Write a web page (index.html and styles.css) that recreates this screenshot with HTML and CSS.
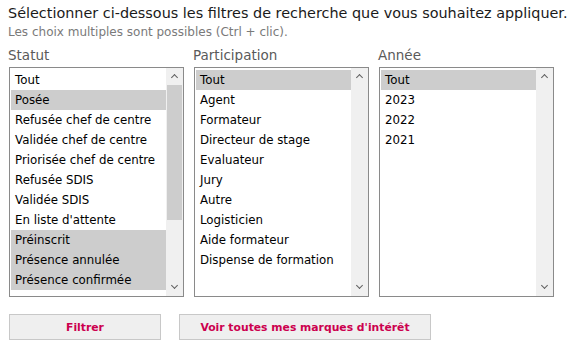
FILE: index.html
```html
<!DOCTYPE html>
<html lang="fr">
    <head>
        <meta charset="UTF-8" />
        <title>Filtres</title>
        <link rel="stylesheet" href="styles.css">
    </head>
    <body>
        <p class="intro">Sélectionner ci-dessous les filtres de recherche que vous souhaitez appliquer.</p>
        <p class="hint">Les choix multiples sont possibles (Ctrl + clic).</p>

        <div class="filters">
            <div class="filter">
                <label>Statut</label>
                <div class="listbox">
                    <ul class="options">
                        <li>Tout</li>
                        <li class="selected">Posée</li>
                        <li>Refusée chef de centre</li>
                        <li>Validée chef de centre</li>
                        <li>Priorisée chef de centre</li>
                        <li>Refusée SDIS</li>
                        <li>Validée SDIS</li>
                        <li>En liste d'attente</li>
                        <li class="selected">Préinscrit</li>
                        <li class="selected">Présence annulée</li>
                        <li class="selected">Présence confirmée</li>
                    </ul>
                    <div class="scrollbar">
                        <span class="arrow up"></span>
                        <div class="track"><div class="thumb"></div></div>
                        <span class="arrow down"></span>
                    </div>
                </div>
            </div>

            <div class="filter">
                <label>Participation</label>
                <div class="listbox">
                    <ul class="options">
                        <li class="selected">Tout</li>
                        <li>Agent</li>
                        <li>Formateur</li>
                        <li>Directeur de stage</li>
                        <li>Evaluateur</li>
                        <li>Jury</li>
                        <li>Autre</li>
                        <li>Logisticien</li>
                        <li>Aide formateur</li>
                        <li>Dispense de formation</li>
                    </ul>
                    <div class="scrollbar">
                        <span class="arrow up"></span>
                        <div class="track"></div>
                        <span class="arrow down"></span>
                    </div>
                </div>
            </div>

            <div class="filter">
                <label>Année</label>
                <div class="listbox">
                    <ul class="options">
                        <li class="selected">Tout</li>
                        <li>2023</li>
                        <li>2022</li>
                        <li>2021</li>
                    </ul>
                    <div class="scrollbar">
                        <span class="arrow up"></span>
                        <div class="track"></div>
                        <span class="arrow down"></span>
                    </div>
                </div>
            </div>
        </div>

        <div class="actions">
            <button class="btn btn-filter">Filtrer</button>
            <button class="btn btn-all">Voir toutes mes marques d'intérêt</button>
        </div>
    </body>
</html>
```

FILE: styles.css
```css
body {
    font-family: "DejaVu Sans", Verdana, sans-serif;
    margin: 0;
    padding: 3px 8px;
    background-color: #ffffff;
    color: #000000;
}
.intro {
    margin: 0;
    font-size: 14.4px;
    line-height: 20px;
    color: #1a1a1a;
}
.hint {
    margin: 0;
    font-size: 12px;
    line-height: 18px;
    color: #7a7a7a;
}
.filters {
    display: flex;
    gap: 10px;
    margin-top: 4px;
    padding-left: 1px;
}
.filter label {
    display: block;
    font-size: 13.5px;
    line-height: 20px;
    color: #5a5a5a;
    margin-bottom: 2px;
    margin-left: -1px;
}
.listbox {
    display: flex;
    width: 173px;
    height: 228px;
    border: 1px solid #8a8a8a;
    background-color: #ffffff;
}
.options {
    flex: 1;
    list-style: none;
    margin: 0;
    padding: 2px 0 0 1px;
}
.options li {
    height: 20px;
    line-height: 20px;
    padding-left: 4px;
    font-size: 11.8px;
    white-space: nowrap;
}
.options li.selected {
    background-color: #cdcdcd;
}
.scrollbar {
    width: 17px;
    background-color: #f0f0f0;
    display: flex;
    flex-direction: column;
}
.track {
    flex: 1;
    position: relative;
}
.thumb {
    position: absolute;
    left: 1px;
    right: 1px;
    top: 0;
    height: 135px;
    background-color: #cdcdcd;
}
.arrow {
    height: 17px;
    position: relative;
}
.arrow::before {
    content: "";
    position: absolute;
    left: 6px;
    width: 4px;
    height: 4px;
    border-left: 1.5px solid #606060;
    border-top: 1.5px solid #606060;
}
.arrow.up::before {
    top: 7px;
    transform: rotate(45deg);
}
.arrow.down::before {
    top: 4px;
    transform: rotate(225deg);
}
.actions {
    display: flex;
    gap: 18px;
    margin-top: 17px;
    padding-left: 1px;
}
.btn {
    height: 26px;
    border: 1px solid #c8c8c8;
    background-color: #efefef;
    color: #cc004e;
    font-family: "DejaVu Sans", Verdana, sans-serif;
    font-size: 10.8px;
    font-weight: bold;
    cursor: pointer;
}
.btn-filter {
    width: 152px;
}
.btn-all {
    width: 252px;
}
```
